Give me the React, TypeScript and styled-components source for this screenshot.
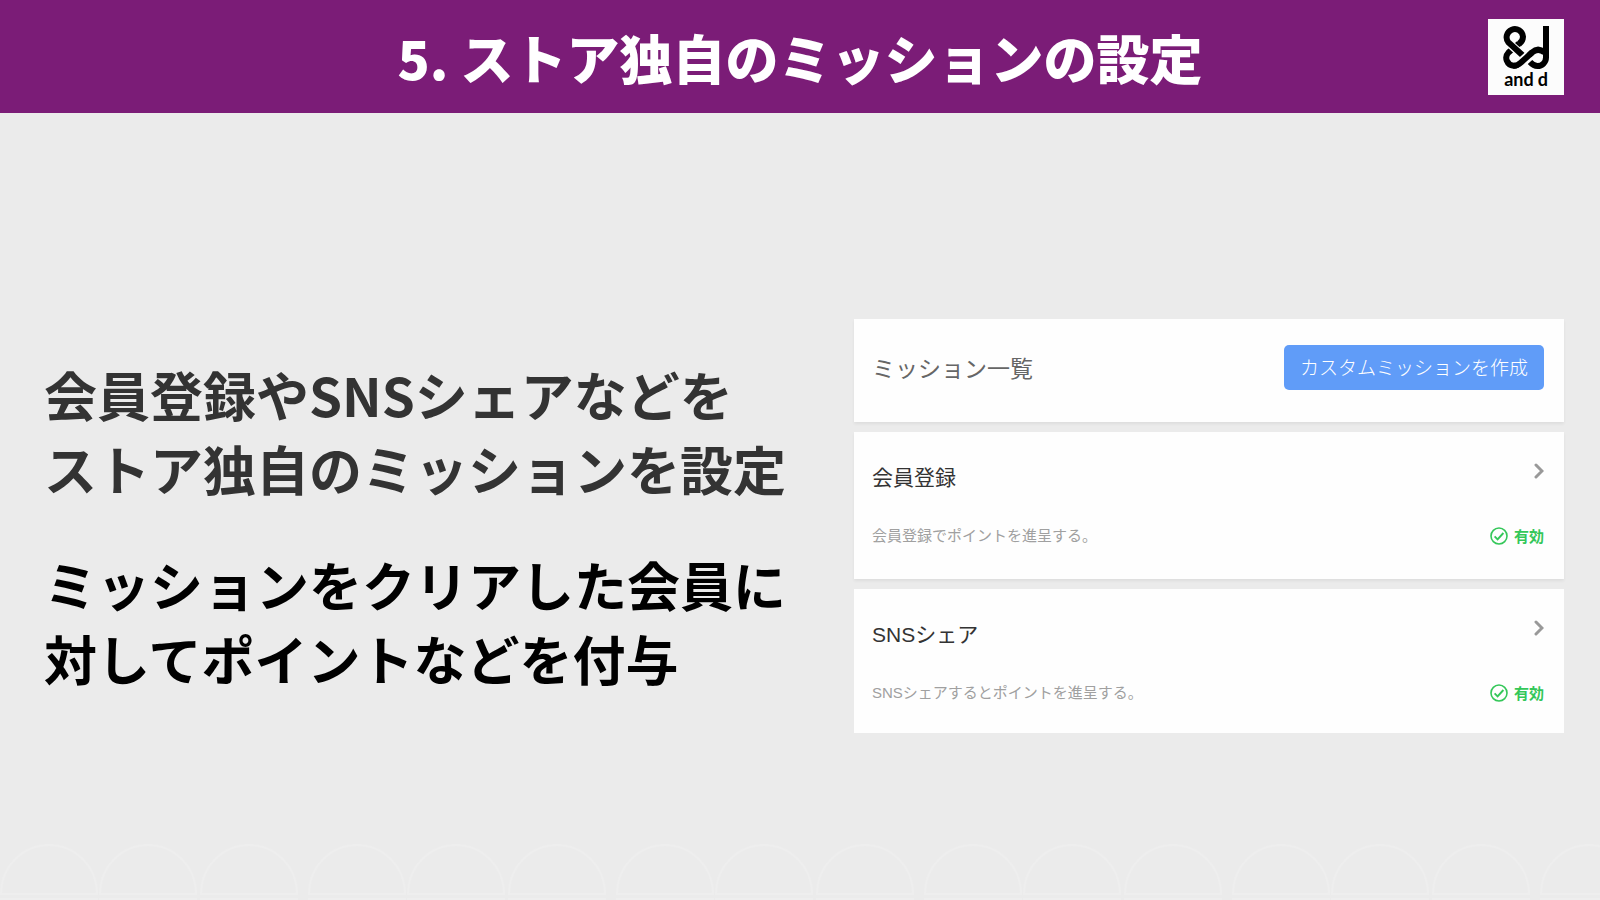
import React from "react";
import styled, { createGlobalStyle } from "styled-components";

const cjk = '"Noto Sans CJK JP", sans-serif';
const ui = '"Liberation Sans", "Noto Sans CJK JP", sans-serif';

const GlobalStyle = createGlobalStyle`
  *, *::before, *::after { box-sizing: border-box; }
  body { margin: 0; background: #ebebeb; font-family: ${cjk}; }
  h1, h2, h3, p, ul { margin: 0; padding: 0; }
`;

const Page = styled.div`
  display: flex;
  flex-direction: column;
  min-height: 100vh;
`;

const TopBar = styled.header`
  display: grid;
  grid-template-columns: 76px 1fr 76px;
  align-items: center;
  height: 113px;
  padding: 0 36px;
  background: #7b1c77;
`;

const Title = styled.h1`
  grid-column: 2;
  text-align: center;
  font-size: 53px;
  font-weight: 900;
  line-height: 74px;
  color: #fff;
`;

const Logo = styled.div`
  display: flex;
  flex-direction: column;
  align-items: center;
  width: 76px;
  height: 76px;
  background: #fcfcfc;
`;

const LogoName = styled.span`
  display: flex;
  gap: 4px;
  font: 700 18px/14px Lato, sans-serif;
  color: #000;
`;

const Main = styled.main`
  flex: 1;
  display: grid;
  grid-template-columns: minmax(0, 81fr) minmax(0, 71fr);
  align-items: center;
  padding: 95px 36px 0 44px;
`;

const Copy = styled.div`
  display: flex;
  flex-direction: column;
  gap: 42px;
`;

const Statement = styled.p<{ $color: string }>`
  font-size: 53px;
  font-weight: 700;
  line-height: 74px;
  color: ${(p) => p.$color};
`;

const Panel = styled.section`
  display: flex;
  flex-direction: column;
  gap: 10px;
  font-family: ${ui};
`;

const PanelHead = styled.div`
  display: flex;
  align-items: center;
  justify-content: space-between;
  height: 103px;
  padding: 0 20px 6px 18px;
  background: #fefefe;
  box-shadow: 0 2px 3px rgba(0, 0, 0, 0.06);
`;

const PanelTitle = styled.h2`
  font-size: 23px;
  font-weight: 400;
  line-height: 32px;
  font-family: ${cjk};
  color: #666;
`;

const CreateButton = styled.button`
  height: 45px;
  padding: 0 16px;
  border: 0;
  border-radius: 5px;
  background: #609cf8;
  color: #fff;
  font-family: ${cjk};
  font-size: 19px;
  font-weight: 300;
  line-height: 28px;
  cursor: pointer;
`;

const MissionList = styled.ul`
  display: flex;
  flex-direction: column;
  gap: 10px;
  list-style: none;
`;

const Mission = styled.li`
  display: grid;
  grid-template-columns: 1fr auto;
  row-gap: 27px;
  padding: 27px 20px 31px 18px;
  background: #fefefe;
  box-shadow: 0 2px 3px rgba(0, 0, 0, 0.06);

  &:last-child {
    padding-bottom: 28px;
    box-shadow: none;
  }
`;

const MissionName = styled.h3`
  font-size: 21px;
  font-weight: 400;
  line-height: 38px;
  color: #333;
`;

const OpenButton = styled.button`
  display: flex;
  justify-content: flex-end;
  align-items: center;
  justify-self: end;
  width: 24px;
  height: 24px;
  padding: 0;
  border: 0;
  background: none;
  cursor: pointer;
`;

const Description = styled.p`
  font-size: 15px;
  font-weight: 400;
  line-height: 24px;
  color: #a0a0a0;
`;

const Status = styled.span`
  display: flex;
  align-items: center;
  gap: 6px;
  font-family: ${cjk};
  font-size: 15px;
  font-weight: 700;
  line-height: 24px;
  color: #34c759;
`;

const Arches = styled.svg`
  display: block;
  width: 100%;
  height: 57px;
`;

const missions = [
  { name: "会員登録", description: "会員登録でポイントを進呈する。" },
  { name: "SNSシェア", description: "SNSシェアするとポイントを進呈する。" },
];

function LogoMark() {
  return (
    <svg width="76" height="53" viewBox="0 0 76 53" fill="none" stroke="#000" strokeWidth="6" aria-hidden="true">
      <path d="M31 24.5L20.5 33.5A7.8 7.8 0 0 0 25.5 46.7Q29 46.9 33 43.5L44 33.5Q50 28 56.5 33.5" />
      <path d="M58 7V38.5A8.5 8.5 0 0 1 49.5 47Q45.5 47 42 43" />
      <path d="M22 25L36.5 38.5" stroke="#fcfcfc" strokeWidth="8.5" />
      <path d="M31 25Q35 22 35 17.7A8.2 8.2 0 1 0 20.5 23.5L37 38.5" />
      <path d="M29 46.5L41 35.5" stroke="#fcfcfc" strokeWidth="8.5" />
      <path d="M25.5 46.7Q29 46.9 33 43.5L44 33.5" />
    </svg>
  );
}

function ChevronIcon() {
  return (
    <svg width="10" height="18" viewBox="0 0 10 18" fill="none" stroke="#999" strokeWidth="3" strokeLinecap="round" aria-hidden="true">
      <path d="M2 3l6 6-6 6" />
    </svg>
  );
}

function CheckIcon() {
  return (
    <svg width="18" height="18" viewBox="0 0 18 18" fill="none" stroke="currentColor" strokeWidth="1.6" aria-hidden="true">
      <circle cx="9" cy="9" r="8" />
      <path d="M4.6 9.3l3 3 5.8-6.3" strokeWidth="1.9" />
    </svg>
  );
}

export default function App() {
  return (
    <Page>
      <GlobalStyle />
      <TopBar>
        <Title>5. ストア独自のミッションの設定</Title>
        <Logo>
          <LogoMark />
          <LogoName>
            <span>and</span>
            <span>d</span>
          </LogoName>
        </Logo>
      </TopBar>
      <Main>
        <Copy>
          <Statement $color="#333">
            会員登録やSNSシェアなどを
            <br />
            ストア独自のミッションを設定
          </Statement>
          <Statement $color="#000">
            ミッションをクリアした会員に
            <br />
            対してポイントなどを付与
          </Statement>
        </Copy>
        <Panel>
          <PanelHead>
            <PanelTitle>ミッション一覧</PanelTitle>
            <CreateButton type="button">カスタムミッションを作成</CreateButton>
          </PanelHead>
          <MissionList>
            {missions.map((m) => (
              <Mission key={m.name}>
                <MissionName>{m.name}</MissionName>
                <OpenButton type="button" aria-label={m.name}>
                  <ChevronIcon />
                </OpenButton>
                <Description>{m.description}</Description>
                <Status>
                  <CheckIcon />
                  有効
                </Status>
              </Mission>
            ))}
          </MissionList>
        </Panel>
      </Main>
      <Arches aria-hidden="true">
        <defs>
          <pattern id="arches" width="308" height="57" patternUnits="userSpaceOnUse">
            <g fill="none" stroke="#eeeeee" strokeWidth="2">
              {[1, 100, 201].map((x) => (
                <path key={x} d={`M${x} 51a48 49 0 0 1 96 0zM${x} 60v-4h96v4`} />
              ))}
            </g>
          </pattern>
        </defs>
        <rect width="100%" height="57" fill="url(#arches)" />
      </Arches>
    </Page>
  );
}
